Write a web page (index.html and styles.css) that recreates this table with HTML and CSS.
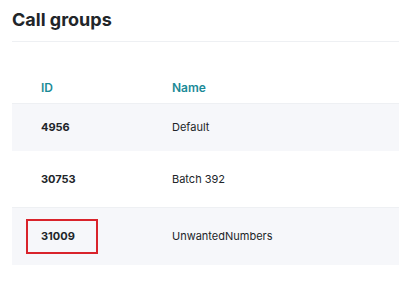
FILE: index.html
```html
<!DOCTYPE html>
<html lang="en">
<head>
    <meta charset="UTF-8">
    <meta name="viewport" content="width=device-width, initial-scale=1.0">
    <title>Call groups</title>
    <link rel="stylesheet" href="styles.css">
</head>
<body>
    <div id="page">
        <h1 class="pageTitle">Call groups</h1>
        <table class="groupTable">
            <thead>
                <tr class="headRow">
                    <th class="colId">ID</th>
                    <th class="colName">Name</th>
                </tr>
            </thead>
            <tbody>
                <tr class="row shaded first">
                    <td class="colId">4956</td>
                    <td class="colName">Default</td>
                </tr>
                <tr class="row">
                    <td class="colId">30753</td>
                    <td class="colName">Batch 392</td>
                </tr>
                <tr class="row shaded">
                    <td class="colId"><span class="marked">31009</span></td>
                    <td class="colName">UnwantedNumbers</td>
                </tr>
            </tbody>
        </table>
    </div>
</body>
</html>
```

FILE: styles.css
```css
body {
    font-family: Inter, "Noto Sans", sans-serif;
    margin: 0;
    padding: 0;
    background-color: #ffffff;
    color: #212529;
}
#page {
    padding-left: 12px;
}
.pageTitle {
    font-size: 18px;
    font-weight: 700;
    margin: 0;
    padding-top: 9px;
    line-height: 22px;
    box-sizing: border-box;
    border-bottom: 1px solid #eef0f3;
    height: 42px;
}
.groupTable {
    width: 100%;
    border-collapse: collapse;
    margin-top: 22px;
}
.groupTable th {
    text-align: left;
    font-size: 12px;
    font-weight: 600;
    color: #1b8a97; /* teal headings */
    height: 32px;
    padding: 7px 0 0 0;
}
.groupTable td {
    padding: 0;
    font-size: 11px;
}
.groupTable .colId {
    width: 131px;
    padding-left: 29px;
}
.groupTable td.colId {
    font-weight: 700;
}
.row {
    height: 57px;
}
.row.first {
    height: 47px;
}
.shaded {
    background-color: #f6f7fa;
}
.shaded td {
    border-top: 1px solid #eef0f3;
}
.marked {
    display: inline-block;
    margin-left: -15px;
    padding: 8px 21px 8px 13px;
    border: 2px solid #d9232b; /* red highlight box */
    line-height: 15px;
}
```
